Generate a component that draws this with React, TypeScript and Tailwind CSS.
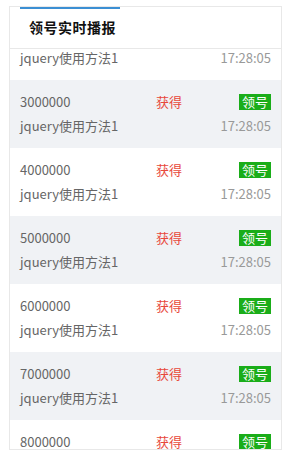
const rows = [
  { num: '3000000', name: 'jquery使用方法1', time: '17:28:05' },
  { num: '4000000', name: 'jquery使用方法1', time: '17:28:05' },
  { num: '5000000', name: 'jquery使用方法1', time: '17:28:05' },
  { num: '6000000', name: 'jquery使用方法1', time: '17:28:05' },
  { num: '7000000', name: 'jquery使用方法1', time: '17:28:05' },
  { num: '8000000', name: 'jquery使用方法1', time: '17:28:05' },
];

export default function App() {
  return (
    <div
      className="w-[293px] h-[461px] bg-white pt-[6px] pl-[9px] pr-[11px]"
      style={{ fontFamily: '"Noto Sans CJK SC", "Noto Sans", sans-serif' }}
    >
      <div className="relative h-[444px] border border-[#e8e8e8] flex flex-col overflow-hidden">
        {/* active tab marker */}
        <span className="absolute top-[-1px] left-[10px] w-[100px] h-[3px] bg-[#3b8fd3] z-10" />

        {/* Header */}
        <div className="h-[42px] shrink-0 border-b border-[#e8e8e8] flex items-center pl-[19px]">
          <span className="text-[14px] font-bold text-[#111] tracking-[0.5px]">领号实时播报</span>
        </div>

        {/* Scrolling list (mid-scroll: previous item partly visible) */}
        <div className="flex-1 overflow-hidden">
          <div className="h-[31px] px-[10px] bg-white">
            <div className="h-[18px] flex items-center justify-between text-[13px]">
              <span className="text-[#666]">jquery使用方法1</span>
              <span className="text-[#999]">17:28:05</span>
            </div>
          </div>
          {rows.map((r, i) => (
            <div
              key={r.num}
              className={`h-[68px] pt-3 px-[10px] flex flex-col gap-1 ${
                i % 2 === 0 ? 'bg-[#f0f2f5]' : 'bg-white'
              }`}
            >
              <div className="h-5 flex items-center text-[13px]">
                <span className="w-[136px] text-[#666]">{r.num}</span>
                <span className="text-[#e8483b]">获得</span>
                <span className="ml-auto h-[16px] px-[3px] bg-[#1aad19] text-white leading-[16px] text-[13px]">
                  领号
                </span>
              </div>
              <div className="h-5 flex items-center justify-between text-[13px]">
                <span className="text-[#666]">{r.name}</span>
                <span className="text-[#999]">{r.time}</span>
              </div>
            </div>
          ))}
        </div>
      </div>
    </div>
  );
}
